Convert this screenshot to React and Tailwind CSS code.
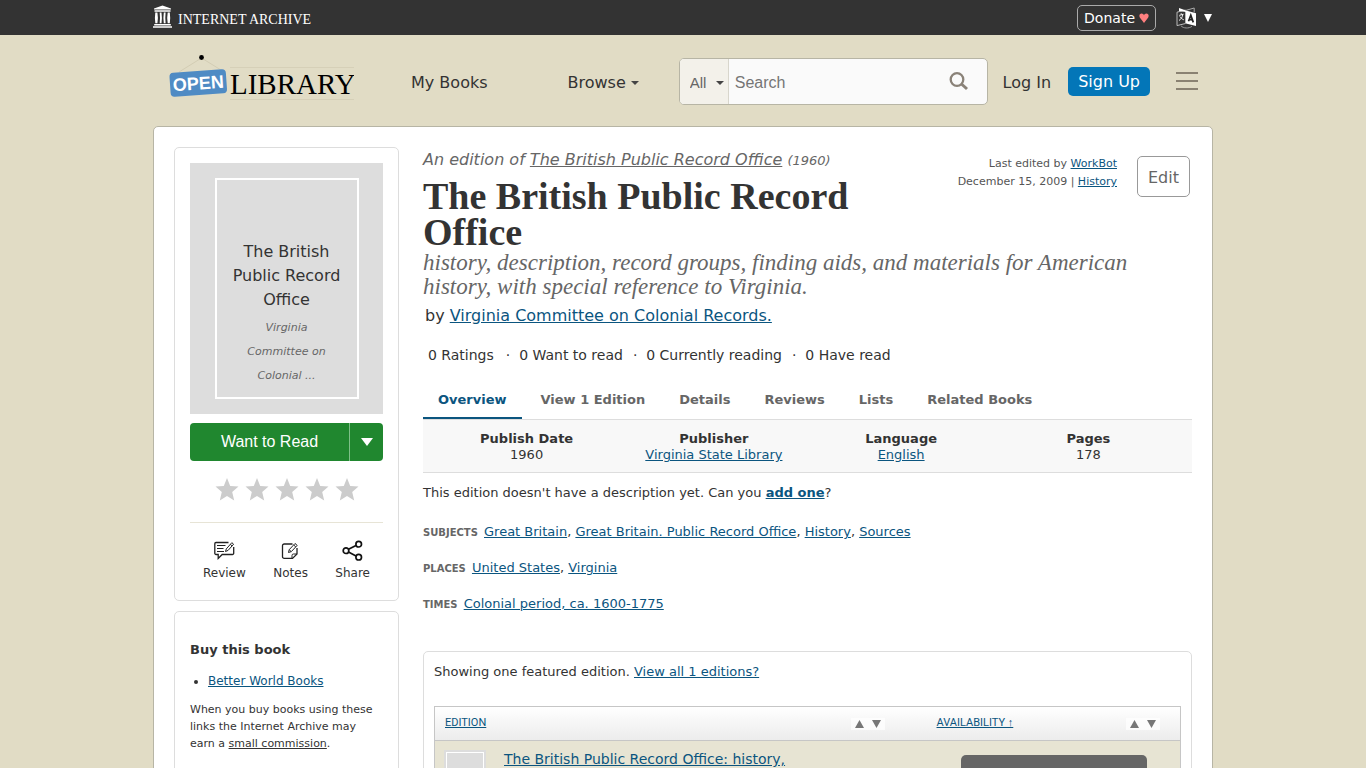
import clsx from "clsx";

const LINK = "text-[#0b557f] underline";

const TABS = ["Overview", "View 1 Edition", "Details", "Reviews", "Lists", "Related Books"];

const FACTS = [
  {label: "Publish Date", value: "1960"},
  {label: "Publisher", value: "Virginia State Library", link: true},
  {label: "Language", value: "English", link: true},
  {label: "Pages", value: "178"},
];

const TAGS = [
  {label: "Subjects", items: ["Great Britain", "Great Britain. Public Record Office", "History", "Sources"]},
  {label: "Places", items: ["United States", "Virginia"]},
  {label: "Times", items: ["Colonial period, ca. 1600-1775"]},
];

function ArchiveIcon() {
  return (
      <svg width="19" height="23" viewBox="0 0 19 23" fill="#fff" aria-hidden="true">
        <path d="M1 3.4 9.5.4 18 3.4v1H1zM1.5 5.3h16v1.5h-16zM1.2 19h16.6v1.4H1.2zM0 21.2h19v1.5H0z" />
        <path d="M2.3 7.5h2.1l.5 5.5-.5 5.3H2.3L1.9 13zM6.7 7.5h1.8l.4 5.5-.4 5.3H6.7l.3-5.3zM10.8 7.5h1.8l-.3 5.5.3 5.3h-1.8l-.4-5.3zM14.7 7.5h2.1l.4 5.5-.4 5.3h-2.1l-.5-5.3z" />
      </svg>
  );
}

function TranslateIcon() {
  return (
      <svg width="21" height="22" viewBox="0 0 21 22" fill="none" aria-hidden="true">
        <path d="M1 5.2 9.500 3v13.500L1 18.600z" stroke="#bbb" />
        <path d="M3 1 10 3.500V5L3 4z" fill="#fff" />
        <path d="M10 3.500 20 6.200V19l-10-2.600z" fill="#fff" />
        <path d="M9.500 3.500 18.200 1v4.500" stroke="#aaa" />
        <path d="M5 18.800c2.200 2.700 8 2.900 11 .5" stroke="#999" />
        <path d="M3.200 8.400l4.300-1.200M5.200 6.200v1.500M6.800 7.500c-.4 2.800-1.800 4.700-3.800 6M3.800 9.500c1 1.700 2.200 2.600 4 3.300" stroke="#eee" />
        <path d="M12.500 14.200l2.300-6 2.500 7.200M13.200 12.300l3.300.7" stroke="#222" strokeWidth="1.700" />
      </svg>
  );
}

function Logo() {
  return (
      <svg width="185" height="48" viewBox="0 0 185 48" role="img" aria-label="Open Library">
        <path d="M10 17 32.500 3 52 15" fill="none" stroke="#d3cdb4" />
        <path d="M61 12.500h124M61 44.500h124" stroke="#d6d0b8" />
        <circle cx="32.500" cy="2.500" r="2.400" fill="#000" />
        <g transform="rotate(-4 29 28)">
          <rect x="1" y="16" width="56.500" height="24" rx="4" fill="#4f8bc4" />
          <text x="29.300" y="34.500" textAnchor="middle" fill="#fff" fontFamily="Liberation Sans, sans-serif" fontWeight="bold" fontSize="18">
            OPEN
          </text>
        </g>
        <text x="61" y="39" fill="#000" fontFamily="Liberation Serif, serif" fontSize="29">LIBRARY</text>
      </svg>
  );
}

function ReviewIcon() {
  return (
      <svg width="21" height="20" viewBox="0 0 21 20" fill="none" stroke="#222" aria-hidden="true">
        <path d="M14.500 1.500H2A1.200 1.200 0 0 0 .8 2.700v9.600a1.200 1.200 0 0 0 1.200 1.200h2.200v4l4-4H18.500a1.200 1.200 0 0 0 1.200-1.200V6" strokeWidth="1.300" />
        <path d="M3 4.500h8.500M3 7.500h6.500M3 10.500h7" strokeWidth="1.100" />
        <path d="M11.500 10.500l.8-2.600 5.500-6.200 1.800 1.500-5.500 6.200zM16.300 3.400l1.800 1.500" />
      </svg>
  );
}

function NotesIcon() {
  return (
      <svg width="19" height="20" viewBox="0 0 19 20" fill="none" stroke="#222" aria-hidden="true">
        <path d="M11.500 3H3.200A1.700 1.700 0 0 0 1.500 4.700v11a1.700 1.700 0 0 0 1.700 1.700h8.300l4.500-4.500V7" strokeWidth="1.300" />
        <path d="M11 17.300v-2.800a1.500 1.500 0 0 1 1.500-1.500H16M7.500 11.500l.7-2.800 5.800-6.200 2.200 1.900-5.900 6.200zM8.200 8.700l2 1.900M12.700 4l2.100 1.900" />
      </svg>
  );
}

function ShareIcon() {
  return (
      <svg width="21" height="21" viewBox="0 0 21 21" fill="none" stroke="#111" strokeWidth="1.700" aria-hidden="true">
        <path d="M6.500 9.300 14 5.600M6.500 12l7.500 4" />
        <circle cx="4" cy="10.700" r="2.800" />
        <circle cx="16.700" cy="4.200" r="2.800" />
        <circle cx="16.700" cy="17.200" r="2.800" />
      </svg>
  );
}

function Star() {
  return (
      <svg width="24" height="23" viewBox="0 0 24 23" fill="#ccc" aria-hidden="true">
        <path d="M12 0l3.200 7.900 8.300.7-6.300 5.500 2 8.300L12 18l-7.200 4.400 2-8.300L.5 8.600l8.300-.7z" />
      </svg>
  );
}

function TopBar() {
  return (
      <div className="bg-[#333]">
        <div className="mx-auto flex h-[35px] max-w-[1060px] items-center justify-between pr-px">
          <a href="#" className="flex items-center gap-[6px] pb-[3px] text-white">
            <ArchiveIcon />
            <span className="pt-2 font-['Liberation_Serif',serif] text-sm leading-4">INTERNET ARCHIVE</span>
          </a>
          <div className="flex items-center gap-5">
            <a href="#" className="flex h-[26px] items-center gap-1 rounded-[5px] border border-[#aaa] px-[6px] text-sm text-white">
              Donate
              <svg width="10" height="10" viewBox="0 0 10 10" fill="#ff7f7f" aria-hidden="true">
                <path d="M5 10 .8 4.500C-.3 2.200.9.500 2.500.5 3.800.5 4.600 1.300 5 2.300 5.400 1.300 6.200.5 7.500.5c1.600 0 2.800 1.700 1.700 4z" />
              </svg>
            </a>
            <button type="button" aria-label="Change language" className="flex items-center gap-[7px]">
              <TranslateIcon />
              <svg width="8" height="8" viewBox="0 0 8 8" fill="#fff" aria-hidden="true"><path d="M0 0h8L4 8z" /></svg>
            </button>
          </div>
        </div>
      </div>
  );
}

function Header() {
  return (
      <header className="mx-auto flex h-[91px] max-w-[1060px] items-center pt-[2px] pr-[15px] pl-4 text-base">
        <a href="#" className="mr-[57px] mb-[5px] shrink-0"><Logo /></a>
        <a href="#" className="mr-20 shrink-0 pt-[2px]">My Books</a>
        <button type="button" className="mr-10 flex shrink-0 items-center gap-[5px] pt-[2px]">
          Browse
          <svg width="8" height="4" viewBox="0 0 8 4" fill="#444" aria-hidden="true"><path d="M0 0h8L4 4z" /></svg>
        </button>
        <form className="flex h-[47px] min-w-0 flex-1 overflow-hidden rounded-[5px] border border-[#b7b5a5] bg-[#fafafa] font-['Liberation_Sans',sans-serif]">
          <div className="relative w-[49px] shrink-0 border-r border-[#d8d6cc] bg-[#f3f1ea]">
            <select aria-label="Search in" className="h-full w-full appearance-none pt-1 pl-[10px] text-[15px] text-[#666]">
              <option>All</option>
            </select>
            <svg width="8" height="4" viewBox="0 0 8 4" fill="#444" className="pointer-events-none absolute top-[22px] right-1" aria-hidden="true">
              <path d="M0 0h8L4 4z" />
            </svg>
          </div>
          <input aria-label="Search" placeholder="Search" className="min-w-0 flex-1 px-[6px] pt-[2px] text-base placeholder:text-[#757575]" />
          <button type="button" aria-label="Submit search" className="px-[18px]">
            <svg width="20" height="20" viewBox="0 0 20 20" fill="none" stroke="#8a8278" aria-hidden="true">
              <circle cx="8" cy="7.500" r="6.300" strokeWidth="2.300" />
              <path d="M12.500 12l5.500 5" strokeWidth="3" />
            </svg>
          </button>
        </form>
        <a href="#" className="mr-[17px] ml-[15px] shrink-0 pt-[3px]">Log In</a>
        <a href="#" className="shrink-0 rounded-[5px] bg-[#0376b8] px-[10px] pt-[3px] pb-[2px] text-white">Sign Up</a>
        <button type="button" aria-label="Menu" className="mb-[2px] ml-[26px] flex w-[22px] shrink-0 flex-col gap-[6px]">
          <span className="h-[2px] w-full bg-[#8a8272]" />
          <span className="h-[2px] w-full bg-[#8a8272]" />
          <span className="h-[2px] w-full bg-[#8a8272]" />
        </button>
      </header>
  );
}

function Tool({icon, label}) {
  return (
      <button type="button" className="flex flex-col items-center gap-1 text-xs leading-4">
        <span className="flex h-[21px] items-center">{icon}</span>
        {label}
      </button>
  );
}

function Sidebar() {
  return (
      <aside className="flex w-[225px] shrink-0 flex-col gap-[10px]">
        <section className="h-[454px] rounded-[5px] border border-[#ddd] p-[15px]">
          <div className="flex h-[251px] justify-center bg-[#ddd] py-[15px]">
            <div className="flex w-[144px] flex-col items-center justify-end border-2 border-white px-3 pb-[9px] text-center leading-6">
              <div className="text-base leading-6">The British Public Record Office</div>
              <div className="mt-1 px-2 text-[11px] leading-6 text-[#666] italic">Virginia Committee on Colonial ...</div>
            </div>
          </div>
          <div className="mt-[9px] flex h-[38px] overflow-hidden rounded-[4px] bg-[#20872f] font-['Liberation_Sans',sans-serif] text-base text-white">
            <button type="button" className="flex-1">Want to Read</button>
            <button type="button" aria-label="More lists" className="flex w-[34px] items-center justify-center border-l border-[#7fc088]">
              <svg width="12" height="8" viewBox="0 0 12 8" fill="#fff" aria-hidden="true"><path d="M0 0h12L6 8z" /></svg>
            </button>
          </div>
          <div className="mt-[17px] flex justify-center gap-[6px]">
            {[1, 2, 3, 4, 5].map((n) => (
                <button type="button" key={n} aria-label={`Rate ${n}`}><Star /></button>
            ))}
          </div>
          <div className="mt-[21px] flex justify-between border-t border-[#e7e4d6] px-[13px] pt-[17px]">
            <Tool icon={<ReviewIcon />} label="Review" />
            <Tool icon={<NotesIcon />} label="Notes" />
            <Tool icon={<ShareIcon />} label="Share" />
          </div>
        </section>
        <section className="rounded-[5px] border border-[#ddd] px-[15px] pt-[30px] pb-10">
          <h2 className="text-[13px] leading-4 font-bold">Buy this book</h2>
          <ul className="mt-[15px] list-disc pl-[18px] text-xs leading-4">
            <li><a href="#" className={LINK}>Better World Books</a></li>
          </ul>
          <p className="mt-3 text-[11px] leading-[17px]">
            When you buy books using these links the Internet Archive may earn a <a href="#" className="underline">small commission</a>.
          </p>
        </section>
      </aside>
  );
}

function SortArrows() {
  return (
      <span className="flex gap-2 bg-white/70 px-1 py-[2px]">
        <svg width="9" height="8" viewBox="0 0 9 8" fill="#777" aria-hidden="true"><path d="M4.500 0 9 8H0z" /></svg>
        <svg width="9" height="8" viewBox="0 0 9 8" fill="#777" aria-hidden="true"><path d="M0 0h9L4.500 8z" /></svg>
      </span>
  );
}

function Editions() {
  return (
      <section className="mt-[37px] rounded-[5px] border border-[#ddd] p-[10px]">
        <p className="leading-5">
          Showing one featured edition. <a href="#" className={LINK}>View all 1 editions?</a>
        </p>
        <table className="mt-[24px] w-full table-fixed border-collapse border border-[#c6c6c6]">
          <thead>
            <tr className="h-[34px] border-b border-[#c6c6c6] bg-linear-to-b from-white to-[#ececec] font-['Roboto',sans-serif] text-[11px]">
              <th className="pr-5 pl-[10px] font-normal">
                <div className="flex items-center justify-between">
                  <a href="#" className={LINK}>EDITION</a>
                  <SortArrows />
                </div>
              </th>
              <th className="w-[276px] pr-5 pl-8 font-normal">
                <div className="flex items-center justify-between">
                  <a href="#" className={LINK}>AVAILABILITY ↑</a>
                  <SortArrows />
                </div>
              </th>
            </tr>
          </thead>
          <tbody>
            <tr className="h-[90px] bg-[#e7e4d3] align-top">
              <td className="px-[9px] pt-[9px]">
                <div className="flex gap-[18px]">
                  <div className="h-[60px] w-[42px] shrink-0 border-2 border-[#ddd] bg-[#ddd] outline outline-1 -outline-offset-3 outline-white" />
                  <a href="#" className={clsx(LINK, "w-[310px] text-sm leading-[18px]")}>
                    The British Public Record Office: history, description, record groups
                  </a>
                </div>
              </td>
              <td className="pt-[14px] pr-[33px] pl-14">
                <div className="h-9 rounded-[5px] bg-[#666]" />
              </td>
            </tr>
          </tbody>
        </table>
      </section>
  );
}

function Book() {
  return (
      <main className="min-w-0 flex-1 text-[13px]">
        <div className="flex pt-px">
          <div className="flex-1">
            <p className="text-base leading-6 text-[#666] italic">
              An edition of <a href="#" className="underline">The British Public Record Office</a>{" "}
              <span className="text-[13px]">(1960)</span>
            </p>
            <h1 className="mt-[5px] pr-10 pb-px font-['Liberation_Serif',serif] text-[38px] leading-9 font-bold">
              The British Public Record Office
            </h1>
          </div>
          <p className="mt-[7px] mr-5 text-right text-[11px] leading-[18px] text-[#555]">
            Last edited by <a href="#" className={LINK}>WorkBot</a>
            <br />
            December 15, 2009 | <a href="#" className={LINK}>History</a>
          </p>
          <a href="#" className="mt-2 mr-[2px] flex h-[41px] w-[53px] items-center justify-center rounded-[5px] border border-[#999] pt-[2px] text-base text-[#666]">
            Edit
          </a>
        </div>
        <h2 className="font-['Liberation_Serif',serif] text-[23px] leading-6 text-[#666] italic">
          history, description, record groups, finding aids, and materials for American history, with special reference to Virginia.
        </h2>
        <p className="mt-[5px] pl-[2px] text-base leading-6">
          by <a href="#" className={LINK}>Virginia Committee on Colonial Records.</a>
        </p>
        <ul className="mt-[17px] flex pl-[5px] text-sm leading-5">
          <li>0 Ratings</li>
          <li className="pl-3">·&nbsp; 0 Want to read</li>
          <li className="pl-[10px]">·&nbsp; 0 Currently reading</li>
          <li className="pl-[10px]">·&nbsp; 0 Have read</li>
        </ul>
        <nav className="mt-[15px] flex h-10 gap-1 border-b border-[#ddd]">
          {TABS.map((tab, i) => (
              <a
                  key={tab}
                  href="#"
                  className={clsx(
                      "border-b-2 px-[15px] pt-[10px] leading-5 font-bold",
                      i === 0 ? "border-[#0b557f] text-[#0b557f]" : "border-transparent text-[#666]",
                  )}
              >
                {tab}
              </a>
          ))}
        </nav>
        <dl className="grid grid-cols-4 border-b border-[#ddd] bg-[#f8f8f8] px-[10px] pt-[11px] pb-[9px] text-center leading-4">
          {FACTS.map(({label, value, link}) => (
              <div key={label}>
                <dt className="font-bold">{label}</dt>
                <dd>{link ? <a href="#" className={LINK}>{value}</a> : value}</dd>
              </div>
          ))}
        </dl>
        <p className="mt-[10px] leading-5">
          This edition doesn't have a description yet. Can you <a href="#" className={clsx(LINK, "font-bold")}>add one</a>?
        </p>
        <div className="mt-[19px] flex flex-col gap-4 leading-5">
          {TAGS.map(({label, items}) => (
              <div key={label}>
                <span className="mr-[2px] text-[10px] leading-none font-bold text-[#666] uppercase">{label}</span>{" "}
                {items.map((item, i) => (
                    <span key={item}>{i > 0 && ", "}<a href="#" className={LINK}>{item}</a></span>
                ))}
              </div>
          ))}
        </div>
        <Editions />
      </main>
  );
}

export default function App() {
  return (
      <div className="min-h-screen bg-[#e1dcc5] font-['DejaVu_Sans',sans-serif] text-[#333]">
        <TopBar />
        <Header />
        <div className="mx-auto flex max-w-[1060px] gap-6 rounded-[5px] border border-[#b7b5a5] bg-white p-5">
          <Sidebar />
          <Book />
        </div>
      </div>
  );
}
